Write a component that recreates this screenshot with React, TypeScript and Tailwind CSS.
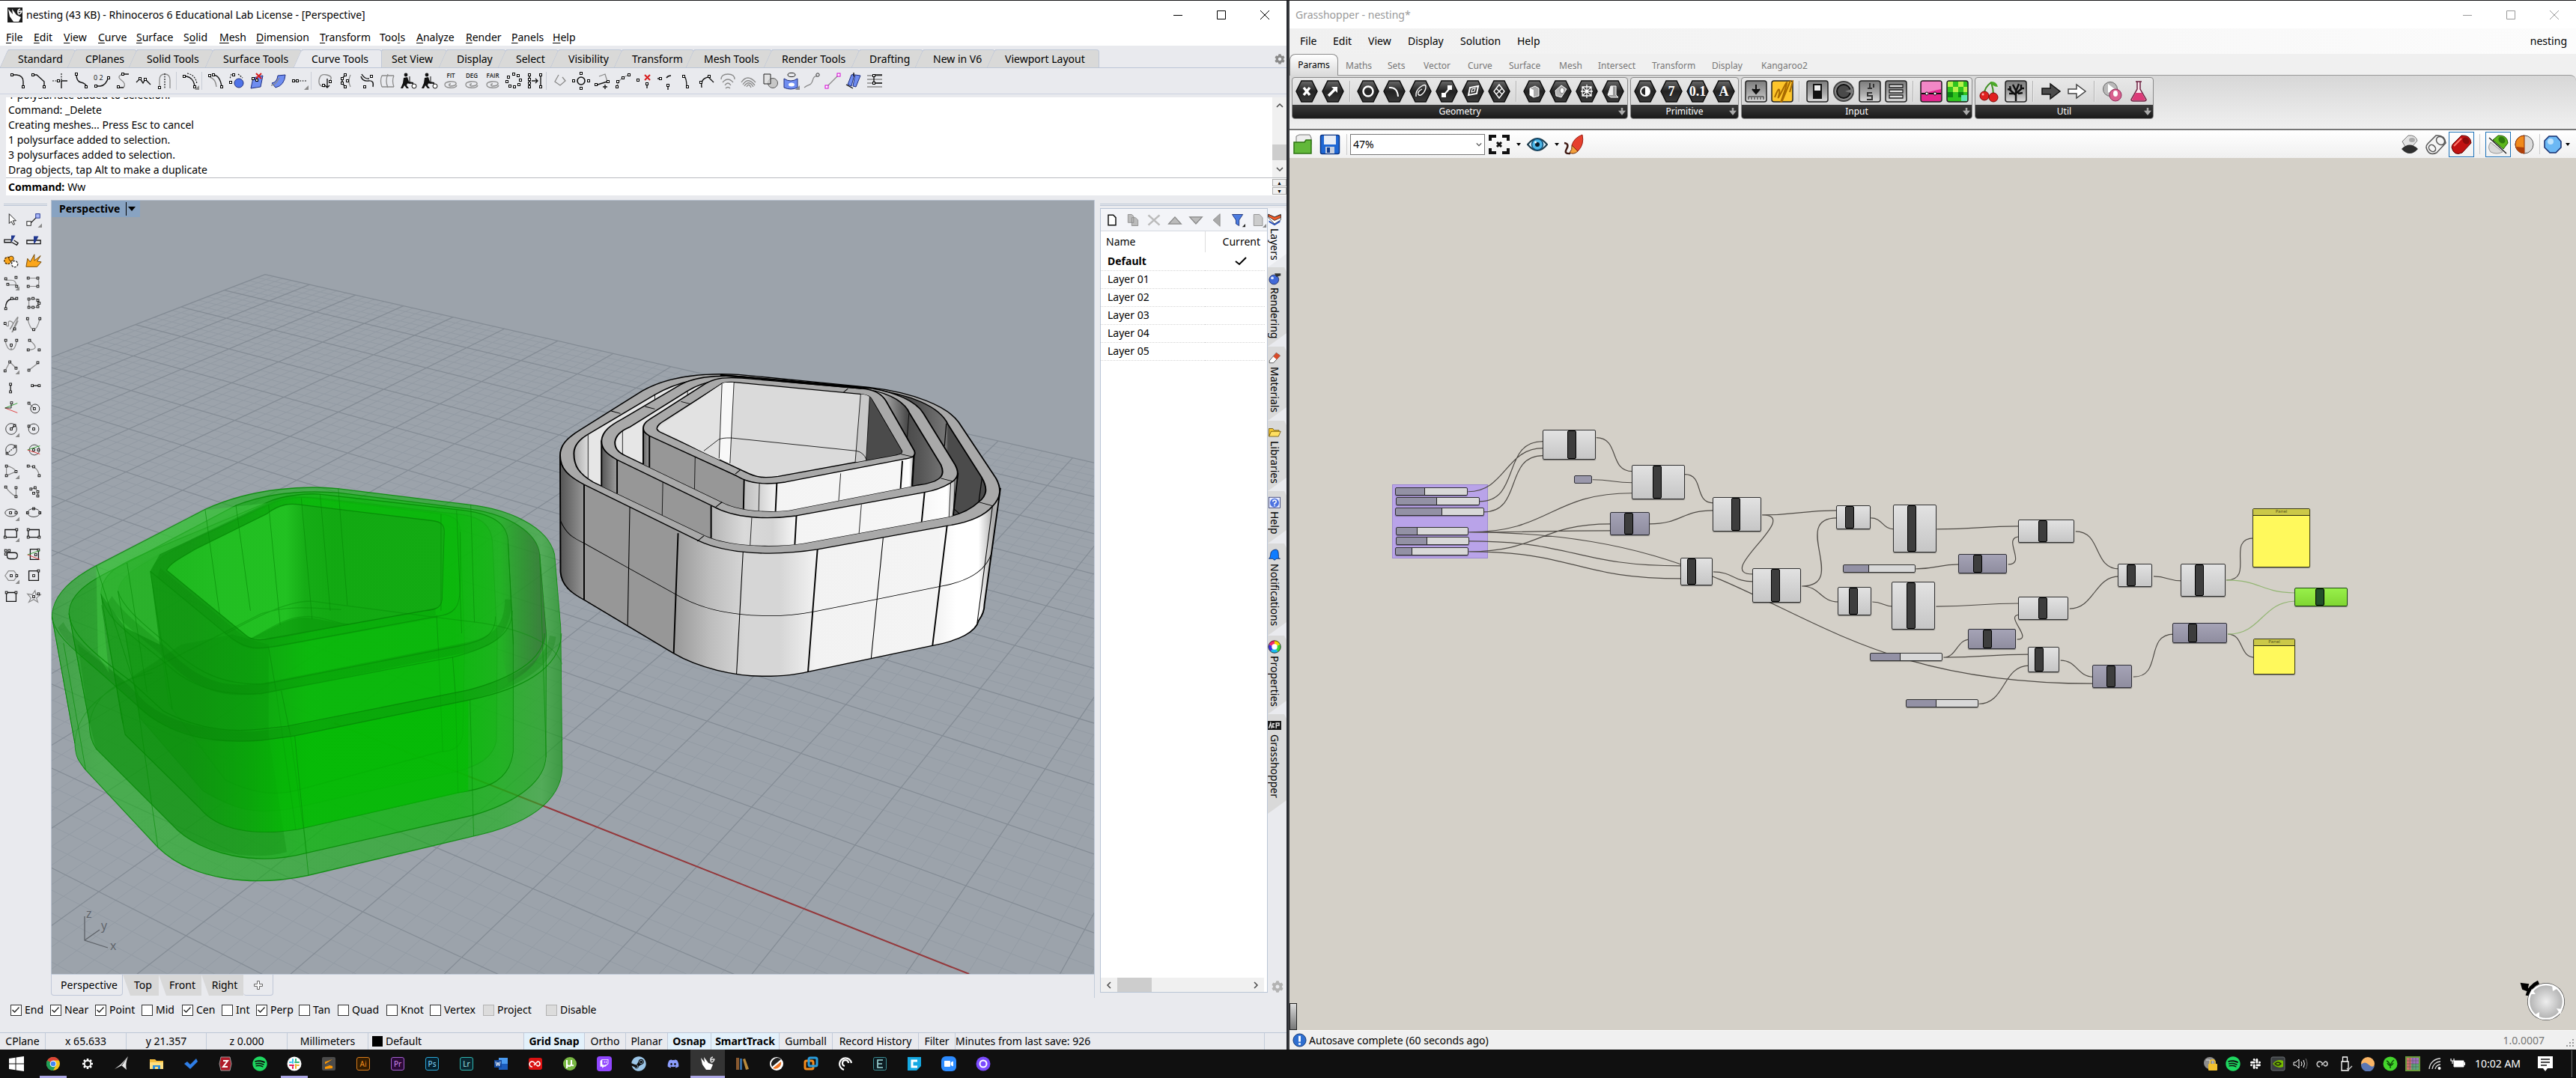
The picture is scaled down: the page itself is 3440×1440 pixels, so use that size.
import React from 'react';
import type { ReactNode } from 'react';
import { FaSpotify, FaSlack, FaTwitch, FaSteam, FaDiscord, FaCog, FaVideo } from 'react-icons/fa';

/* ---------- shared drawing helpers ---------- */

type GlyphProps = { d?: string; n?: string; g?: string; red?: string; b?: string; dash?: string; children?: ReactNode };

// Line-art glyph: d = dark stroke, g = grey stroke, n = control points, b = blue fill
function Glyph({ d, n, g, red, b, dash, children }: GlyphProps) {
  return (
    <svg viewBox="0 0 24 24" className="size-6 shrink-0" fill="none" aria-hidden="true">
      {b && <path d={b} fill="#6f8df0" stroke="#1f2f80" />}
      {g && <path d={g} stroke="#8b8b8b" strokeWidth="1.3" />}
      {d && <path d={d} stroke="#161616" strokeWidth="1.4" />}
      {dash && <path d={dash} stroke="#161616" strokeWidth="1.2" strokeDasharray="2 1.5" />}
      {red && <path d={red} stroke="#d81e1e" strokeWidth="2" />}
      {n &&
        n.split(' ').map((p) => {
          const [x, y] = p.split(',').map(Number);
          return <rect key={p} x={x - 1.5} y={y - 1.5} width="3" height="3" fill="#fff" stroke="#000" />;
        })}
      {children}
    </svg>
  );
}

const Corner = () => <path d="M24 18V24H18Z" fill="#8a8a8a" />;
const SwirlText = ({ t }: { t: string }) => (
  <Glyph g="M12 16c-3 0-3 3 0 3s8-1 7-4-15-3-15 2 14 6 16 1">
    <text x="12" y="8" fontSize="8" fontWeight="600" textAnchor="middle" fill="#222" fontFamily="Open Sans, sans-serif">
      {t}
    </text>
  </Glyph>
);
const Porter = () => (
  <Glyph>
    <circle cx="8" cy="4" r="2.4" fill="#111" />
    <path d="M5 8L10 7L12 13L18 14V16L10 15.500L9 18L12 22H9L6 18L4 22H1L4 15Z" fill="#111" />
    <circle cx="19" cy="19" r="3" fill="#fff" stroke="#111" />
    <path d="M13 6V16" stroke="#111" />
  </Glyph>
);

/* ---------- Rhino curve toolbar ---------- */

const curveTools: { name: string; icon: ReactNode }[][] = [
  [
    { name: 'Fillet curves', icon: <Glyph d="M4 4H10Q19 5 19 13V20" n="4,4 19,20" /> },
    { name: 'Chamfer curves', icon: <Glyph d="M4 4H9L19 13V20" n="4,4 19,20" /> },
    { name: 'Connect', icon: <Glyph d="M14 12H22M14 12V22" dash="M2 12H14M14 2V12" n="10,12" /> },
    { name: 'Blend curves', icon: <Glyph d="M6 3Q6 13 12 14T20 20" n="6,3 19,20" /> },
    {
      name: 'Arc blend',
      icon: (
        <Glyph d="M4 19H10Q18 18 21 6" n="4,19 21,8">
          <text x="1" y="11" fontSize="9" fill="#111" fontFamily="Open Sans, sans-serif">0 2</text>
        </Glyph>
      ),
    },
    { name: 'Match', icon: <Glyph d="M12 3H20M4 21H13" g="M12 3Q3 6 10 11T13 21" n="12,3 6,20" /> },
    { name: 'Symmetry', icon: <Glyph d="M2 14L7 9L11 15L14 10L21 17" n="7,9 14,10" /> },
    { name: 'Offset', icon: <Glyph g="M5 22V11Q5 3 12 3T19 11V22" dash="M12 2V22" n="5,21" /> },
  ],
  [{ name: 'Offset curve', icon: <Glyph d="M3 6H7Q17 8 18 20" dash="M8 2Q19 4 21 16" n="4,6 18,20"><Corner /></Glyph> }],
  [
    { name: 'Tween', icon: <Glyph d="M9 4Q18 5 20 20" g="M4 7Q12 9 13 20" n="4,5 9,4 20,20" /> },
    { name: 'Project', icon: <Glyph dash="M5 3L3 9M14 3L20 8" n="8,4 4,14"><circle cx="15" cy="15" r="6" fill="#4f73e8" stroke="#1c2c7c" /></Glyph> },
    { name: 'Extract isocurve', icon: <Glyph b="M6 8L19 5L16 20L3 22Z" red="M10 2L17 9M17 2L10 9" n="6,9 11,11" /> },
    { name: 'Pull curve', icon: <Glyph b="M3 15Q10 14 11 5L21 4Q20 18 8 21Z" g="M2 18Q8 18 13 8" /> },
    { name: 'Convert', icon: <Glyph dash="M5 12H22" n="4,12 9,12"><Corner /></Glyph> },
  ],
  [
    { name: 'Close curve', icon: <Glyph g="M12 20Q3 20 4 11T14 4T19 11" d="M15 9V20M12 18L15 21L18 18" n="10,18 19,13" /> },
    { name: 'Edit points', icon: <Glyph d="M11 4L7 9V15L11 20" g="M18 4Q14 12 18 20" n="11,4 7,9 7,15 11,20 14,12" /> },
    { name: 'Smooth', icon: <Glyph d="M4 6Q6 13 14 12T20 20M5 3Q9 10 15 9" n="9,20 18,6" /> },
    { name: 'Cross section', icon: <Glyph g="M4 5Q1 12 4 20M12 3Q8 12 12 21M20 5Q17 12 20 20M4 5H20M4 20H20" /> },
    { name: 'Cart', icon: <Porter /> },
    { name: 'Cart twice', icon: <Porter /> },
    { name: 'Fit', icon: <SwirlText t="FIT" /> },
    { name: 'Degree', icon: <SwirlText t="DEG" /> },
    { name: 'Fair', icon: <SwirlText t="FAIR" /> },
    { name: 'Rebuild', icon: <Glyph n="12,3 18,5 21,11 19,17 13,20 7,19 3,13 5,7" /> },
    { name: 'Rebuild master', icon: <Glyph d="M5 3V21M20 3V21M8 12H16M13 9L16 12L13 15" n="5,4 5,10 5,15 5,20 20,4 20,20" /> },
  ],
  [
    { name: 'Simplify', icon: <Glyph g="M10 4L5 13L12 18L19 12L15 7" /> },
    { name: 'Circle handle', icon: <Glyph n="12,2 2,12 22,12 12,22"><circle cx="12" cy="12" r="5" stroke="#111" strokeWidth="1.600" /></Glyph> },
    { name: 'Add kink', icon: <Glyph g="M8 6L16 3L19 13" d="M3 18L19 13M13 20H19M16 17V23" n="4,17 20,13" /> },
    { name: 'Add knot', icon: <Glyph g="M4 20Q5 9 20 4" n="4,20 5,13 12,8 20,4" /> },
    { name: 'Remove knot', icon: <Glyph red="M13 4L20 11M20 4L13 11" n="4,11 16,16" d="M16 18V22" /> },
    { name: 'Extend', icon: <Glyph d="M2 9H6M16 20V24M14 8Q16 5 20 5" n="6,9 16,18" /> },
    { name: 'Curve down', icon: <Glyph d="M9 5Q13 8 13 20" n="9,6 14,20" /> },
    { name: 'Handlebar', icon: <Glyph d="M5 21Q3 9 14 7L21 14" n="4,14 15,6" /> },
    { name: 'Catenary', icon: <Glyph g="M3 10Q3 3 12 3T21 10M5 14Q12 6 19 14M8 18Q12 12 16 18M9 22Q12 19 15 22" /> },
    { name: 'Contour', icon: <Glyph g="M2 14Q10 2 21 14M4 17Q11 6 20 18M6 19Q12 10 18 20M9 20Q12 14 15 21" /> },
    {
      name: 'Boolean',
      icon: (
        <Glyph>
          <circle cx="16" cy="15" r="6.500" fill="#c7c7c7" stroke="#555" />
          <path d="M4 3H13V16H4Z" fill="#ddd" fillOpacity=".7" stroke="#222" />
        </Glyph>
      ),
    },
    { name: 'Region', icon: <Glyph b="M3 9Q12 15 21 9V21Q12 25 3 21Z"><ellipse cx="13" cy="4" rx="5" ry="2.600" stroke="#222" /><ellipse cx="13" cy="17" rx="4" ry="2.500" fill="#fff" /><Corner /></Glyph> },
    { name: 'Freeform', icon: <Glyph g="M2 21C8 16 11 19 13 12S17 6 19 6"><circle cx="20" cy="4" r="2.200" stroke="#333" /></Glyph> },
    {
      name: 'Line between',
      icon: (
        <Glyph g="M4 20L20 4">
          <rect x="2" y="18" width="4" height="4" fill="#fff" stroke="#d400d4" />
          <rect x="18" y="2" width="4" height="4" fill="#fff" stroke="#d400d4" />
        </Glyph>
      ),
    },
    { name: 'Unroll', icon: <Glyph b="M9 4L13 3L9 19L4 17ZM14 4L21 5L15 20L11 19Z" d="M2 17L11 22M12 1V6" /> },
    { name: 'Duplicate', icon: <Glyph g="M2 5H22M2 10H22M2 15H22M2 20H22" d="M11 4V16M11 4H22M11 15H22" n="11,5 11,15" /> },
  ],
];

/* ---------- Rhino left tool palette ---------- */

const paletteTools: { name: string; icon: ReactNode }[] = [
  { name: 'Select', icon: <Glyph><path d="M9 4V18L12 15L15 20L17 19L14.500 14H19Z" fill="#fff" stroke="#111" /></Glyph> },
  { name: 'Point tools', icon: <Glyph d="M8 17L17 8"><rect x="2" y="15" width="6" height="6" fill="#fff" stroke="#111" /><rect x="15" y="4" width="6" height="6" fill="#a9b8f8" stroke="#1b2f90" /><Corner /></Glyph> },
  { name: 'Trim', icon: <Glyph d="M2 11H12V15H2ZM13 15L20 19L22 16L16 12"><path d="M12 5H18L13 14H12Z" fill="#20378f" /></Glyph> },
  { name: 'Split', icon: <Glyph d="M2 12H22V17H2Z"><path d="M12 6H19L14 16H12Z" fill="#20378f" /></Glyph> },
  { name: 'Join', icon: <Glyph><circle cx="7" cy="11" r="5" fill="#fba61b" stroke="#4a2c00" strokeDasharray="3 1.500" strokeWidth="1.500" /><circle cx="12" cy="8" r="3.500" fill="#fba61b" stroke="#4a2c00" /><circle cx="17" cy="16" r="4.500" fill="#fff" stroke="#333" strokeDasharray="3 1.500" strokeWidth="1.500" /></Glyph> },
  { name: 'Explode', icon: <Glyph><path d="M1 20L3 8L7 13L13 2L13 11L22 4L17 12L23 13L17 20Z" fill="#fba61b" stroke="#6a4100" /></Glyph> },
  { name: 'Curve', icon: <Glyph g="M4 9H12Q19 9 19 16H7" n="4,7 19,5 7,15 20,18"><Corner /></Glyph> },
  { name: 'Control curve', icon: <Glyph g="M4 6H18Q21 12 18 18H4" n="4,6 18,6 4,18 18,18" /> },
  { name: 'Arc by points', icon: <Glyph d="M4 20Q3 8 12 6H20" n="4,20 13,5 20,5" /> },
  { name: 'Closed curve', icon: <Glyph g="M5 6H18V18H5Z" n="5,6 11,5 18,8 20,12 18,17 11,18 5,18" /> },
  { name: 'Helix', icon: <Glyph g="M3 12Q9 18 8 12T12 8T12 17T17 8T16 17T22 7" n="3,11 17,19" /> },
  { name: 'Parabola', icon: <Glyph g="M3 4Q7 20 12 20T21 4" n="3,4 12,20 21,4" /> },
  { name: 'Conic', icon: <Glyph g="M3 5Q6 19 12 19T20 5M12 19V12" n="4,5 20,5 12,12" /> },
  { name: 'Hyperbola', icon: <Glyph g="M3 19Q24 19 6 5" n="6,5 4,19 20,19" /> },
  { name: 'Polyline', icon: <Glyph g="M3 19L10 6L20 16" n="3,19 10,6 19,15"><Corner /></Glyph> },
  { name: 'Line', icon: <Glyph g="M5 18L19 7" n="5,18 18,7" /> },
  { name: 'Vertical line', icon: <Glyph d="M11 8V19" n="11,8 11,19" /> },
  { name: 'Horizontal line', icon: <Glyph d="M10 10H21" n="10,10 20,10" /> },
  { name: 'Axis line', icon: <Glyph><path d="M3 12L21 19" stroke="#d33" /><path d="M3 12L21 5" stroke="#2a9a2a" /><path d="M3 12H12M12 5V12" stroke="#111" /><rect x="11" y="3" width="3" height="3" fill="#fff" stroke="#111" /></Glyph> },
  { name: 'Circle around curve', icon: <Glyph n="5,5 13,13" g="M5 5L13 13"><circle cx="14" cy="13" r="6.500" stroke="#222" /></Glyph> },
  { name: 'Circle', icon: <Glyph n="12,12 17,7" d="M12 12L17 7"><circle cx="12" cy="12" r="8" stroke="#333" /><Corner /></Glyph> },
  { name: 'Circle center', icon: <Glyph n="12,12 5,8"><circle cx="12" cy="12" r="7.500" stroke="#333" /></Glyph> },
  { name: 'Circle diameter', icon: <Glyph n="6,17 18,7" dash="M6 17L18 7"><circle cx="12" cy="12" r="8" stroke="#333" /></Glyph> },
  { name: 'Circle axis', icon: <Glyph n="12,12 19,12"><circle cx="13" cy="12" r="7.500" stroke="#333" /><path d="M3 12L21 6" stroke="#2a9a2a" /><path d="M3 12L21 18" stroke="#d33" /></Glyph> },
  { name: 'Arc', icon: <Glyph g="M5 19V5Q15 6 19 13Z" n="5,5 5,19 19,13"><Corner /></Glyph> },
  { name: 'Arc start', icon: <Glyph g="M4 5Q18 5 20 19" n="4,5 12,6 20,19" /> },
  { name: 'Arc end', icon: <Glyph g="M4 5Q10 14 19 19V5" n="4,5 19,19 19,6" /> },
  { name: 'Arc chain', icon: <Glyph n="8,8 14,6 18,12 18,18 12,14" g="M8 8L14 6L18 12V18" /> },
  { name: 'Ellipse', icon: <Glyph n="11,12 19,12"><ellipse cx="12" cy="12" rx="9" ry="5.500" stroke="#333" /><Corner /></Glyph> },
  { name: 'Ellipse diameter', icon: <Glyph n="3,12 21,12 12,6"><ellipse cx="12" cy="12" rx="9" ry="6" stroke="#333" /></Glyph> },
  { name: 'Rectangle', icon: <Glyph d="M3 6H20V17H3Z" n="3,17 20,6"><Corner /></Glyph> },
  { name: 'Rectangle corner', icon: <Glyph d="M4 6H20V17H4Z" n="4,6 4,17 20,17" /> },
  { name: 'Rounded rectangle', icon: <Glyph d="M6 9H17Q21 9 21 13T17 18H10Q6 18 6 14Z" n="4,6 9,6 4,11" /> },
  { name: 'Rectangle axis', icon: <Glyph d="M7 4H19V19H7Z" n="19,5 15,12"><path d="M3 12L21 6" stroke="#2a9a2a" /><path d="M3 12L21 19" stroke="#d33" /></Glyph> },
  { name: 'Polygon', icon: <Glyph g="M3 12L8 5H16L21 12L16 19H8Z" n="12,12 20,12"><Corner /></Glyph> },
  { name: 'Square center', icon: <Glyph d="M5 5H19V19H5Z" n="12,12 19,5" /> },
  { name: 'Square', icon: <Glyph d="M5 6H19V19H5Z" n="5,6 19,6" /> },
  { name: 'Star', icon: <Glyph g="M3 8L10 9L14 3L15 9L22 9L16 14L18 20L12 16L5 20L8 14Z" n="12,12 19,8" /> },
];

/* ---------- Rhino window ---------- */

const rhinoMenu = [
  ['', 'F', 'ile', 'w-[37px]'], ['', 'E', 'dit', 'w-10'], ['', 'V', 'iew', 'w-[46px]'], ['', 'C', 'urve', 'w-[51px]'],
  ['', 'S', 'urface', 'w-[63px]'], ['S', 'o', 'lid', 'w-12'], ['', 'M', 'esh', 'w-[49px]'], ['', 'D', 'imension', 'w-[85px]'],
  ['', 'T', 'ransform', 'w-20'], ['Too', 'l', 's', 'w-[49px]'], ['', 'A', 'nalyze', 'w-[66px]'], ['', 'R', 'ender', 'w-[61px]'],
  ['', 'P', 'anels', 'w-[55px]'], ['', 'H', 'elp', 'w-[50px]'],
];

const rhinoTabs: [string, string][] = [
  ['Standard', 'w-[90px]'], ['CPlanes', 'w-[82px]'], ['Solid Tools', 'w-[102px]'], ['Surface Tools', 'w-[118px]'],
  ['Curve Tools', 'w-[107px]'], ['Set View', 'w-[87px]'], ['Display', 'w-[79px]'], ['Select', 'w-[70px]'],
  ['Visibility', 'w-[85px]'], ['Transform', 'w-24'], ['Mesh Tools', 'w-[104px]'], ['Render Tools', 'w-[117px]'],
  ['Drafting', 'w-[85px]'], ['New in V6', 'w-24'], ['Viewport Layout', 'w-[139px]'],
];

function WindowButtons({ tone }: { tone: string }) {
  return (
    <div className={'ml-auto flex ' + tone}>
      <button aria-label="Minimize" className="grid h-9 w-[58px] place-items-center">
        <svg viewBox="0 0 12 12" className="size-3" stroke="currentColor"><path d="M0 6.500H12" /></svg>
      </button>
      <button aria-label="Maximize" className="grid h-9 w-[58px] place-items-center">
        <svg viewBox="0 0 12 12" className="size-3" fill="none" stroke="currentColor"><path d="M.5.5H11.500V11.500H.5Z" /></svg>
      </button>
      <button aria-label="Close" className="grid h-9 w-[58px] place-items-center">
        <svg viewBox="0 0 12 12" className="size-3" stroke="currentColor"><path d="M0 0L12 12M12 0L0 12" /></svg>
      </button>
    </div>
  );
}

function Tri({ dir, className }: { dir: 'up' | 'down' | 'left' | 'right'; className?: string }) {
  const d = { up: 'M1 7L5 3L9 7', down: 'M1 3L5 7L9 3', left: 'M7 1L3 5L7 9', right: 'M3 1L7 5L3 9' }[dir];
  return (
    <svg viewBox="0 0 10 10" className={className ?? 'size-2.5'} fill="none" stroke="#4a4a4a" strokeWidth="1.500" aria-hidden="true">
      <path d={d} />
    </svg>
  );
}

function RhinoHeader() {
  return (
    <header>
      <div className="flex h-[37px] items-center bg-white pl-2.5">
        <svg viewBox="0 0 20 20" className="size-5" aria-hidden="true">
          <rect width="20" height="20" fill="#1c1c1c" />
          <path d="M1 2L7 9L6 2L12 10L18 13L15 19H8L3 12Z" fill="#fff" />
          <path d="M17 2Q13 3 14 7T18 7T14 6" fill="none" stroke="#fff" strokeWidth="1.500" />
        </svg>
        <h1 className="ml-[5px]">nesting (43 KB) - Rhinoceros 6 Educational Lab License - [Perspective]</h1>
        <WindowButtons tone="text-black" />
      </div>
      <nav className="flex h-[23px] items-center bg-white pl-2">
        {rhinoMenu.map(([a, u, z, w]) => (
          <button key={a + u + z} className={'shrink-0 text-left whitespace-nowrap ' + w}>
            {a}<span className="underline underline-offset-2">{u}</span>{z}
          </button>
        ))}
      </nav>
      <div className="flex h-[30px] items-end border-b border-[#bcc6d6] pl-[11px]">
        <div role="tablist" className="flex">
          {rhinoTabs.map(([t, w]) => {
            const on = t === 'Curve Tools';
            return (
              <button
                key={t}
                role="tab"
                aria-selected={on}
                className={
                  'relative h-6 shrink-0 rounded-tr border-t border-r border-[#c0c8d8] pl-[13px] text-left whitespace-nowrap ' +
                  'before:absolute before:-left-1.5 before:top-[-1px] before:h-6 before:w-4 before:-skew-x-[24deg] before:rounded-tl before:border-t before:border-l before:border-[#c0c8d8] ' +
                  (on ? 'z-10 -mb-px bg-[#e9eaee] before:bg-[#e9eaee] ' : 'bg-[#d9d9d8] before:bg-[#d9d9d8] ') +
                  w
                }
              >
                <span className="relative">{t}</span>
              </button>
            );
          })}
        </div>
        <button aria-label="Toolbar options" className="mr-0.5 mb-1 ml-auto text-[#8a8a8a]"><FaCog className="size-3.5" /></button>
      </div>
      <div className="flex h-[35px] items-center border-b border-[#ccd2e0] pl-2.5">
        {curveTools.map((group, i) => (
          <div key={i} className="mr-1 flex gap-1 border-r border-[#c9cdd6] pr-[3px] pl-0.5 last:border-0">
            {group.map((t) => (
              <button key={t.name} aria-label={t.name}>{t.icon}</button>
            ))}
          </div>
        ))}
      </div>
    </header>
  );
}

function CommandArea() {
  return (
    <section aria-label="Command history" className="mt-1 ml-2 bg-white">
      <div className="flex h-[108px] border-b border-[#b9bcc0]">
        <div className="flex flex-1 flex-col justify-end overflow-hidden pl-[3px] leading-5">
          <p className="shrink-0">1 polysurface added to selection.</p>
          <p className="shrink-0">Command: _Delete</p>
          <p className="shrink-0">Creating meshes... Press Esc to cancel</p>
          <p className="shrink-0">1 polysurface added to selection.</p>
          <p className="shrink-0">3 polysurfaces added to selection.</p>
          <p className="shrink-0">Drag objects, tap Alt to make a duplicate</p>
        </div>
        <div className="flex w-[19px] flex-col items-center bg-[#f0f0f0] py-1.5">
          <Tri dir="up" />
          <div className="mt-auto h-[21px] w-full bg-[#cdcdcd]" />
          <Tri dir="down" className="mt-[7px] size-2.5" />
        </div>
      </div>
      <div className="flex h-[23px] items-center pl-[3px]">
        <label htmlFor="cmd" className="mr-1 font-bold">Command:</label>
        <input id="cmd" defaultValue="Ww" className="h-5 min-w-0 flex-1 outline-none" />
        <div className="flex w-[19px] flex-col gap-px">
          <button aria-label="Previous command" className="grid h-2.5 place-items-center border border-[#adadad] bg-[#f0f0f0] text-[7px] leading-none">▲</button>
          <button aria-label="Next command" className="grid h-2.5 place-items-center border border-[#adadad] bg-[#f0f0f0] text-[7px] leading-none">▼</button>
        </div>
      </div>
    </section>
  );
}

/* ---------- Viewport drawing ---------- */

// Perspective projection of the construction plane, in major grid units
function project(u: number, v: number): [number, number] {
  const w = 1 - 0.0173 * u - 0.0263 * v;
  return [(354 + 52.25 * u - 62.5 * v) / w, (367.6 + 6.9 * u + 10.9 * v) / w];
}

function gridPath(major: boolean) {
  let d = '';
  for (let i = 0; i <= 100; i++) {
    if ((i % 5 === 0) !== major) continue;
    const t = i / 5;
    const [a, b] = [project(0, t), project(20, t)];
    const [c, e] = [project(t, 0), project(t, 20)];
    d += `M${a[0].toFixed(1)} ${a[1].toFixed(1)}L${b[0].toFixed(1)} ${b[1].toFixed(1)}`;
    d += `M${c[0].toFixed(1)} ${c[1].toFixed(1)}L${e[0].toFixed(1)} ${e[1].toFixed(1)}`;
  }
  return d;
}

const outerRim = 'M99 508C99 470 115 440 155 405L325 250C390 195 480 176 590 184L950 235C1070 255 1165 310 1197 375L1300 600C1315 640 1315 675 1290 712C1265 755 1220 778 1165 790L808 885C690 912 560 905 480 850L165 625C120 590 99 560 99 508Z';
const outerHole = 'M137 500C137 465 155 440 180 420L360 265C430 205 500 195 560 192L960 245C1060 262 1145 310 1168 385L1260 595C1278 640 1275 670 1252 695C1230 725 1200 745 1165 755L770 860C680 880 560 870 500 830L190 615C150 580 137 550 137 500Z';
const midRim = 'M213 450C215 410 240 385 270 362L430 225C480 185 560 188 600 192L960 240C1020 255 1080 290 1100 340L1187 545C1200 580 1195 600 1175 618C1150 640 1120 652 1100 657L750 750C670 765 580 762 520 712L255 525C225 500 213 480 213 450Z';
const midHole = 'M250 455C252 430 265 410 290 395L450 250C490 212 540 200 600 203L950 245C1015 262 1050 300 1062 340L1148 545C1158 580 1152 598 1130 612C1115 620 1100 625 1085 627L730 728C670 738 590 730 545 695L280 510C258 495 250 480 250 455Z';
const innerRim = 'M328 400C328 375 345 365 360 350L500 220C530 195 560 195 600 198L940 242C970 250 985 262 997 290L1075 490C1080 510 1070 518 1050 522L720 615C660 628 620 620 585 590L345 430C333 420 328 412 328 400Z';
const innerHole = 'M366 400C366 385 380 375 390 365L540 225C548 215 560 213 580 215L925 262C945 265 955 272 960 290L1040 490C1042 500 1035 503 1020 507L700 592C660 600 640 597 610 575L375 415C368 410 366 405 366 400Z';

function Stops({ list }: { list: [number, string][] }) {
  return <>{list.map(([o, c], i) => <stop key={i} offset={o} stopColor={c} />)}</>;
}

function WhiteBoxes() {
  return (
    <g transform="translate(700 440) scale(.4847 .3333)" fill="none" stroke="#000" strokeLinejoin="round">
      <defs>
        <linearGradient id="wb-outer" gradientUnits="userSpaceOnUse" x1="99" x2="1312" y1="0" y2="0">
          <Stops list={[[0, '#555'], [0.055, '#979797'], [0.26, '#979797'], [0.27, '#9d9d9d'], [0.34, '#bdbdbd'], [0.42, '#d6d6d6'], [0.5, '#d6d6d6'], [0.58, '#f2f2f2'], [0.86, '#f4f4f4'], [0.9, '#fff'], [0.95, '#fff'], [0.985, '#aaa'], [1, '#ccc']]} />
        </linearGradient>
        <linearGradient id="wb-mid" gradientUnits="userSpaceOnUse" x1="213" x2="1195" y1="0" y2="0">
          <Stops list={[[0, '#555'], [0.04, '#979797'], [0.305, '#979797'], [0.31, '#b5b5b5'], [0.4, '#dadada'], [0.48, '#d4d4d4'], [0.54, '#f4f4f4'], [0.9, '#f6f6f6'], [0.97, '#fff'], [1, '#999']]} />
        </linearGradient>
        <linearGradient id="wb-inner" gradientUnits="userSpaceOnUse" x1="328" x2="1075" y1="0" y2="0">
          <Stops list={[[0, '#666'], [0.02, '#979797'], [0.37, '#979797'], [0.375, '#c0c0c0'], [0.43, '#d4d4d4'], [0.49, '#f4f4f4'], [0.95, '#f6f6f6'], [0.98, '#fff'], [1, '#aaa']]} />
        </linearGradient>
        <linearGradient id="wb-void" gradientUnits="userSpaceOnUse" x1="137" x2="1270" y1="0" y2="0">
          <Stops list={[[0, '#a8a8a8'], [0.04, '#e6e6e6'], [0.5, '#e6e6e6'], [0.73, '#d8d8d8'], [0.76, '#a0a0a0'], [0.81, '#4b4b4b'], [0.84, '#555'], [0.905, '#777'], [0.91, '#4b4b4b'], [1, '#4b4b4b']]} />
        </linearGradient>
        <clipPath id="wb-clip-outer"><path d={outerHole} /></clipPath>
        <clipPath id="wb-clip-mid"><path d={midHole} /></clipPath>
        <clipPath id="wb-clip-inner"><path d={innerHole} /></clipPath>
      </defs>
      <g strokeWidth="4">
        <path fill="url(#wb-outer)" d="M99 508L100 975C103 1030 130 1060 165 1087L410 1300C480 1360 580 1393 660 1393C720 1393 750 1385 782 1375L1125 1270C1200 1250 1245 1215 1252 1170C1265 1145 1268 1125 1268 1105L1312 640Z" />
        <path fill="#a9a9a9" d={outerRim} />
        <path fill="url(#wb-void)" d={outerHole} />
        <g clipPath="url(#wb-clip-outer)">
          <path d="M176 425V640M360 262V300" strokeWidth="2" />
          <path d="M1163 380L1158 470M1262 590L1252 700M1085 620Q1190 720 1210 760" strokeWidth="2.500" />
          <path fill="url(#wb-mid)" d="M213 450V700L500 900H1170L1195 580Z" />
          <path d="M256 525V700M515 710V860M750 750L745 880M1103 657L1094 790" />
          <path d="M382 615L380 760M627 758L622 880M929 705L922 830M1175 620L1170 770M1187 600L1182 770" strokeWidth="2" />
        </g>
        <path fill="#a9a9a9" d={midRim} />
        <path fill="url(#wb-void)" d={midHole} />
        <g clipPath="url(#wb-clip-mid)">
          <path d="M271 410V560M450 240V270M1060 340L1055 440" strokeWidth="2" />
          <path fill="url(#wb-inner)" d="M328 400V560L600 760L1068 660L1075 490Z" />
          <path d="M345 430V560M606 600L604 730M696 620L692 745M1042 530L1036 660" />
          <path d="M471 515L469 660M648 620L646 740M872 580L866 700M1072 510L1066 650" strokeWidth="2" />
        </g>
        <path fill="#a9a9a9" d={innerRim} />
        <path fill="#dadada" d={innerHole} />
        <g clipPath="url(#wb-clip-inner)">
          <path fill="#e2e2e2" stroke="none" d="M366 400L545 220L538 530Z" />
          <path fill="#f8f8f8" stroke="none" d="M545 215H578L567 540L537 520Z" />
          <path fill="#c9c9c9" stroke="none" d="M927 262H952L942 535H912Z" />
          <path fill="#4b4b4b" stroke="none" d="M952 265L1045 490L1040 510L942 535Z" />
          <path strokeWidth="2" d="M545 220L537 520M578 215L567 540M927 262L912 535M952 270L942 530M495 490L535 445Q545 437 570 438L915 490Q935 495 943 525" />
        </g>
        <path strokeWidth="7" d="M540 186L950 238" />
        <path strokeWidth="9" d="M700 208L930 238" />
      </g>
      <path strokeWidth="4" d="M165 625V1087M424 820L412 1300M808 885L782 1375M1165 790L1125 1270" />
      <path strokeWidth="2.200" d="M291 715L285 1190M603 895L585 1385M989 838L956 1320M1290 715L1248 1180" />
      <path strokeWidth="2.200" d="M100 770C115 820 130 835 165 860L288 960L415 1063C470 1110 530 1135 593 1144C660 1155 730 1153 795 1135L970 1085L1143 1034C1220 1015 1270 975 1288 900" />
      <path strokeWidth="2.500" d="M240 330L265 340M333 312L360 322M432 292L458 302M477 852L495 830M528 715L545 695M582 582L595 566M1038 503L1072 514M1148 600L1180 612M1252 695L1290 710M880 255L892 240" />
    </g>
  );
}

function GreenBoxes() {
  return (
    <g transform="translate(0 260) scale(.4847 .7525)" fill="none" stroke="#078a07" strokeOpacity=".85" strokeWidth="1.800">
      <defs>
        <linearGradient id="gb-core" gradientUnits="userSpaceOnUse" x1="245" x2="1505" y1="0" y2="0">
          <Stops list={[[0, '#0c960c'], [0.22, '#0b960b'], [0.36, '#08a508'], [0.48, '#04ba04'], [0.8, '#04ba04'], [0.9, '#14b514'], [1, '#1fa01f']]} />
        </linearGradient>
        <linearGradient id="gb-side" gradientUnits="userSpaceOnUse" x1="143" x2="1549" y1="0" y2="0">
          <Stops list={[[0, '#0ba00b'], [0.1, '#14b214'], [0.8, '#0aac0a'], [0.88, '#0cb00c'], [0.96, '#22b022'], [1, '#009200']]} />
        </linearGradient>
        <linearGradient id="gb-cup" gradientUnits="userSpaceOnUse" x1="459" x2="1224" y1="0" y2="0">
          <Stops list={[[0, '#20bd20'], [0.2, '#25c425'], [0.43, '#25c425'], [0.5, '#17aa17'], [0.6, '#13a613'], [1, '#14a914']]} />
        </linearGradient>
        <linearGradient id="gb-shade" gradientUnits="userSpaceOnUse" x1="1380" x2="1505" y1="0" y2="0">
          <stop offset="0" stopColor="#205a20" stopOpacity="0" />
          <stop offset="1" stopColor="#3f5a40" stopOpacity=".55" />
        </linearGradient>
        <linearGradient id="gb-front" gradientUnits="userSpaceOnUse" x1="500" x2="1300" y1="0" y2="0">
          <stop offset="0" stopColor="#0a9a0a" stopOpacity="0" />
          <stop offset=".35" stopColor="#04bb04" stopOpacity=".7" />
          <stop offset="1" stopColor="#04bb04" stopOpacity=".7" />
        </linearGradient>
      </defs>
      <path fill="url(#gb-side)" fillOpacity=".6" d="M143 750C145 715 190 685 265 660L565 560C700 520 850 518 930 523L1297 552C1400 560 1510 590 1528 640L1545 770L1549 1020C1545 1080 1450 1120 1305 1140L848 1210C700 1230 530 1220 435 1160L235 1022C215 1005 208 1000 206 975Z" />
      <path fill="url(#gb-core)" fillOpacity=".45" d="M190 745C190 705 265 680 350 655L650 553C750 528 850 526 940 531L1300 560C1400 570 1480 600 1487 640L1505 780L1504 1000C1500 1050 1400 1085 1303 1103L845 1170C700 1195 560 1170 490 1130L265 985C250 970 247 960 245 935Z" />
      <path fill="url(#gb-core)" fillOpacity=".45" d="M278 710C280 670 340 655 410 635L735 548C780 533 860 532 880 533L1280 562C1370 570 1400 590 1400 620L1414 790V990C1405 1040 1350 1055 1260 1063L820 1128C700 1140 600 1130 550 1090L345 960L335 930Z" />
      <path fill="url(#gb-core)" fillOpacity=".4" strokeOpacity=".25" d="M325 705C330 675 400 655 440 640L740 552C780 538 840 537 880 540L1255 568C1330 572 1355 590 1357 620L1370 790L1368 970C1360 1000 1320 1015 1260 1025L810 1090C700 1105 640 1090 560 1060L385 930L378 900Z" />
      <path fill="#007c00" fillOpacity=".22" stroke="none" d="M215 800L345 865L500 800L640 782L740 800L740 960L790 1168C700 1185 560 1170 490 1130L265 985L245 935Z" />
      <path fill="url(#gb-front)" stroke="none" d="M500 970C640 975 740 972 812 962L1290 898V1060L820 1128C700 1140 600 1130 550 1090Z" />
      <path fill="url(#gb-core)" fillOpacity=".3" strokeOpacity=".15" d="M414 670C420 655 450 640 500 625L740 550C770 538 800 537 830 538L1215 568C1260 572 1268 585 1268 600L1280 800L1275 960C1270 985 1240 990 1215 990L810 1060C750 1070 680 1060 620 1040L475 915L465 905Z" />
      <path fill="#4ad44a" fillOpacity=".4" stroke="none" d="M265 662L565 561L735 549L440 640L414 670L440 800L345 770L278 710L300 850L270 820Z" />
      <path fill="url(#gb-shade)" stroke="none" d="M1300 565C1400 570 1480 600 1487 640L1505 780C1500 820 1460 850 1400 868Z" />
      <path fill="url(#gb-cup)" fillOpacity=".85" d="M459 668C470 655 500 645 540 630L735 568C770 550 800 549 830 552L1190 580C1220 582 1224 590 1224 600L1218 720C1215 735 1200 738 1170 740L780 785C720 792 700 795 680 785Z" />
      <path fill="#0b9a0b" fillOpacity=".7" stroke="none" d="M690 790C740 775 780 755 830 752C880 752 900 760 960 764L780 787Z" />
      <path strokeOpacity=".4" d="M690 790C740 775 780 750 850 750C900 752 920 762 960 764M620 782C720 745 800 722 860 723L1180 750L1330 762C1450 775 1530 800 1549 835M206 975C215 900 330 870 430 840L720 745C800 730 850 735 940 738M247 940C260 880 350 860 420 850" />
      <g stroke="#067a06" strokeOpacity=".24" strokeWidth="18">
        <path d="M167 765C190 800 300 845 380 900C450 950 600 965 700 963C760 960 800 954 840 949L1290 889C1420 870 1515 835 1523 785" />
        <path d="M302 720C340 760 430 795 480 830C560 880 640 885 720 878L1280 806C1350 797 1400 780 1400 720" />
        <path strokeOpacity=".16" d="M437 672L650 785C690 805 720 799 770 794L1200 744" />
      </g>
      <path d="M143 750C150 790 230 820 320 875L385 912C480 970 620 975 720 970L812 962L1295 898C1430 880 1545 845 1547 780M190 745C195 790 300 835 360 865L450 918C560 955 650 955 720 950L790 945L1290 881C1400 862 1500 830 1500 780" />
      <path strokeOpacity=".6" d="M278 710C290 760 380 790 460 835C540 885 640 890 720 887L1250 822C1350 805 1410 785 1412 740M325 705C340 740 420 775 470 805C560 860 640 872 730 870L1245 805C1330 795 1365 785 1365 750" />
      <path strokeOpacity=".6" d="M414 670L640 790C690 812 720 806 760 803L1220 748C1262 742 1268 725 1268 690V600" />
      <path strokeOpacity=".7" d="M265 660L380 890M350 655L405 885M565 560L605 745M650 553L690 740M740 552L772 765M830 540L860 755M882 533L910 740M932 523L957 730M1297 552L1307 760M812 962L850 1210M775 882L800 960M740 805L760 880M1295 898L1305 1140M1247 822L1255 890M1203 748L1208 810M175 797L236 1022M380 910L435 1160M1258 562L1272 780M1215 568V740M1487 640L1505 1000M143 750L206 975M1400 620L1414 800M325 705L385 930M414 670L475 915M280 730L340 940M190 745L247 940" />
      <path strokeOpacity=".3" d="M800 960L845 1170M760 880L815 1128M1255 890L1262 1063M1208 810L1220 990" />
    </g>
  );
}

function Viewport() {
  return (
    <div className="relative min-h-0 flex-1 overflow-hidden border-t border-l border-[#b9c2cf] bg-[#9ca3ab]">
      <svg viewBox="69 269 1392 1033" preserveAspectRatio="xMinYMin slice" className="absolute inset-0 size-full" role="img" aria-label="Perspective view of nested boxes">
        <path d={gridPath(false)} stroke="#939ba4" strokeWidth="1" fill="none" />
        <path d={gridPath(true)} stroke="#838b94" strokeWidth="1.200" fill="none" />
        <path d="M446 967L1294 1302" stroke="#95383b" strokeWidth="2" />
        <GreenBoxes />
        <WhiteBoxes />
        <g stroke="#5e6268" strokeWidth="1.300" fill="none"><path d="M113 1225V1257L144 1267M113 1257L133 1243" /></g>
        <g fill="#5e6268" fontSize="16" fontFamily="Open Sans, sans-serif">
          <text x="115" y="1227">z</text><text x="135" y="1243">y</text><text x="147" y="1270">x</text>
        </g>
      </svg>
      <button className="absolute top-0 left-0 flex h-[22px] items-center bg-[#88a3c2] pr-1.5 pl-2.5 font-bold">
        Perspective
        <span className="ml-2 h-[18px] w-px bg-black" />
        <svg viewBox="0 0 10 6" className="ml-0.5 h-1.5 w-2.5" aria-hidden="true"><path d="M0 0H10L5 6Z" /></svg>
      </button>
    </div>
  );
}

const viewTabs: [string, string][] = [['Top', 'w-12'], ['Front', 'w-[57px]'], ['Right', 'w-[56px]']];

/* ---------- Layers panel ---------- */

const layerButtons: { name: string; icon: ReactNode }[] = [
  { name: 'New layer', icon: <Glyph><path d="M6 4H14L18 8V20H6Z" fill="#fff" stroke="#111" strokeWidth="1.800" /></Glyph> },
  { name: 'New sublayer', icon: <Glyph><path d="M4 3H10L13 6V16H4ZM10 8H16L20 12V21H10Z" fill="#bbb" stroke="#888" /></Glyph> },
  { name: 'Delete', icon: <Glyph><path d="M3 4L21 20M21 4L3 20" stroke="#bbb" strokeWidth="3" /></Glyph> },
  { name: 'Move up', icon: <Glyph><path d="M2 18L12 7L22 18Z" fill="#bbb" stroke="#888" strokeWidth="1.500" /></Glyph> },
  { name: 'Move down', icon: <Glyph><path d="M2 7L12 18L22 7Z" fill="#bbb" stroke="#888" strokeWidth="1.500" /></Glyph> },
  { name: 'Move left', icon: <Glyph><path d="M17 2V22L6 12Z" fill="#aaa" stroke="#888" /></Glyph> },
  { name: 'Filter', icon: <Glyph><path d="M3 3H20L14 12V21L9 18V12Z" fill="#4b7be0" stroke="#12266e" /><path d="M24 18V23H19Z" fill="#222" /></Glyph> },
  { name: 'Tools', icon: <Glyph><path d="M4 3H13L18 8V21H4Z" fill="#ccc" stroke="#888" /><Corner /></Glyph> },
];

const sideTabs: { name: string; h: string; icon: ReactNode }[] = [
  { name: 'Layers', h: 'h-[79px]', icon: <><path d="M1 3L12 8L23 3V13L12 20L1 9Z" fill="#fff" stroke="#222" /><path d="M1 3L12 8L23 4V9L12 14L1 7Z" fill="#f05a28" stroke="#222" /><path d="M2 14L12 20L22 14V17L12 23L2 17Z" fill="#284fb8" /></> },
  { name: 'Rendering', h: 'h-[106px]', icon: <><circle cx="11" cy="14" r="8.500" fill="#4169d8" stroke="#0d1b52" /><circle cx="8" cy="11" r="2.500" fill="#dfe8ff" /><path d="M12 3H23V7L15 9Z" fill="#333" /></> },
  { name: 'Materials', h: 'h-[99px]', icon: <><path d="M3 17L15 3L22 8L10 21L3 21Z" fill="#fff" stroke="#333" /><path d="M10 10L15 3L22 8L16 15Z" fill="#d84a28" /></> },
  { name: 'Libraries', h: 'h-[94px]', icon: <><path d="M2 20V6H9L11 9H20V12" fill="#f4c52c" stroke="#5e4600" /><path d="M2 20L6 11H23L19 20Z" fill="#ffdf60" stroke="#5e4600" /></> },
  { name: 'Help', h: 'h-[70px]', icon: <><rect x="2" y="3" width="20" height="19" fill="#e6ebff" stroke="#222a66" /><circle cx="12" cy="13" r="8" fill="#4d72e0" /><path d="M9 11Q9 8 12 8T15 11Q15 13 12 14V16M12 17V19" fill="none" stroke="#fff" strokeWidth="2" /></> },
  { name: 'Notifications', h: 'h-[123px]', icon: <path d="M2 19Q5 17 5 11T12 3T19 11T22 19H15Q12 24 9 19Z" fill="#0f7cff" stroke="#001a55" /> },
  { name: 'Properties', h: 'h-[105px]', icon: <><path d="M12 12L12 1A11 11 0 0 1 22 8Z" fill="#f7d300" /><path d="M12 12L22 8A11 11 0 0 1 18 21Z" fill="#37d637" /><path d="M12 12L18 21A11 11 0 0 1 5 20Z" fill="#17b9ee" /><path d="M12 12L5 20A11 11 0 0 1 2 8Z" fill="#3b30e0" /><path d="M12 12L2 8A11 11 0 0 1 12 1Z" fill="#f32a6a" /><circle cx="12" cy="12" r="5" fill="#fff" /><circle cx="12" cy="12" r="11" fill="none" stroke="#111" /></> },
  { name: 'Grasshopper', h: 'h-[133px]', icon: <><rect y="4" width="24" height="16" fill="#1a1a1a" /><path d="M2 17L5 8L7 17M12 9H9V15H12M15 17V8H20V12H15" fill="none" stroke="#ddd" strokeWidth="2" /></> },
];

function LayersPanel() {
  return (
    <aside aria-label="Panels" className="flex w-[249px] shrink-0 pt-[5px]">
      <div className="flex flex-1 flex-col border-t-[3px] border-double border-[#bcc6d6]">
        <div className="flex min-h-0 flex-1 pt-[3px] pb-[7px]">
          <div className="flex w-[224px] shrink-0 flex-col overflow-hidden border border-[#b9c5d6] bg-white">
            <div className="flex h-[30px] shrink-0 items-center gap-1 border-b border-[#d6dae2] bg-[#f3f4f8] pl-[3px]">
              {layerButtons.map((b) => (
                <button key={b.name} aria-label={b.name} className="grid w-6 shrink-0 place-items-center [&>svg]:size-5">{b.icon}</button>
              ))}
            </div>
            <table className="w-[219px] table-fixed border-collapse text-left">
              <thead>
                <tr className="h-7">
                  <th className="w-[139px] border-r border-[#ddd] pl-[7px] font-normal">Name</th>
                  <th className="pr-1.5 text-right font-normal">Current</th>
                </tr>
              </thead>
              <tbody>
                {['Default', 'Layer 01', 'Layer 02', 'Layer 03', 'Layer 04', 'Layer 05'].map((l, i) => (
                  <tr key={l} className="h-6 border-b border-dotted border-[#d4d4d4]">
                    <td className={i === 0 ? 'pl-[9px] font-bold' : 'pl-[9px]'}>{l}</td>
                    <td>
                      {i === 0 && (
                        <svg viewBox="0 0 16 12" className="ml-10 h-3 w-4" fill="none" stroke="#000" strokeWidth="2" aria-label="Current layer">
                          <path d="M1 6L6 10L15 1" />
                        </svg>
                      )}
                    </td>
                  </tr>
                ))}
              </tbody>
            </table>
            <div className="mt-auto mr-1 flex h-[19px] items-center bg-[#f0f0f0] pr-1.5 pl-1.5">
              <Tri dir="left" />
              <div className="ml-1.5 h-full w-[46px] bg-[#cdcdcd]" />
              <Tri dir="right" className="ml-auto size-2.5" />
            </div>
          </div>
          <div className="flex flex-1 flex-col">
            {sideTabs.map((t, i) => (
              <button
                key={t.name}
                className={
                  'flex shrink-0 flex-col items-start pt-1.5 [clip-path:polygon(0_0,88%_0,100%_6px,100%_calc(100%-18px),0_100%)] ' +
                  (i === 0 ? 'bg-[#f3f4f8] ' : 'bg-[#d9d9d9] ') + t.h
                }
              >
                <svg viewBox="0 0 24 24" className="size-[18px] shrink-0" aria-hidden="true">{t.icon}</svg>
                <span className="mt-[3px] text-[14px] leading-[18px] [writing-mode:vertical-rl]">{t.name}</span>
              </button>
            ))}
            <button aria-label="Panel options" className="mt-auto mr-1 self-end text-[#b3b3b3]"><FaCog className="size-4" /></button>
          </div>
        </div>
      </div>
    </aside>
  );
}

/* ---------- Osnap and status ---------- */

const snaps: [string, boolean, string][] = [
  ['End', true, 'w-[53px]'], ['Near', true, 'w-[60px]'], ['Point', true, 'w-[62px]'], ['Mid', false, 'w-[54px]'],
  ['Cen', true, 'w-[53px]'], ['Int', false, 'w-[46px]'], ['Perp', true, 'w-[57px]'], ['Tan', false, 'w-[52px]'],
  ['Quad', false, 'w-[65px]'], ['Knot', false, 'w-[58px]'], ['Vertex', false, 'w-[71px]'], ['Project', false, 'w-[84px]'], ['Disable', false, 'w-20'],
];

function OsnapBar() {
  return (
    <div className="flex h-[46px] shrink-0 items-start pt-[6px] pl-[13px]">
      {snaps.map(([t, on, w]) => {
        const off = t === 'Project' || t === 'Disable';
        return (
          <label key={t} className={'flex shrink-0 items-center gap-1 ' + w}>
            <span className="grid size-4 place-items-center">
              <input
                type="checkbox"
                defaultChecked={on}
                className={'peer col-start-1 row-start-1 size-[15px] appearance-none border ' + (off ? 'border-[#b3b3b3] bg-[#dcdcdc]' : 'border-[#333] bg-white')}
              />
              <svg viewBox="0 0 12 12" className="pointer-events-none invisible col-start-1 row-start-1 size-3 peer-checked:visible" fill="none" stroke="#222" strokeWidth="1.300" aria-hidden="true">
                <path d="M1.500 6L4.500 9L10.500 2.500" />
              </svg>
            </span>
            {t}
          </label>
        );
      })}
    </div>
  );
}

const cells: [string, string][] = [
  ['CPlane', 'w-[61px]'], ['x 65.633', 'w-[108px]'], ['y 21.357', 'w-[107px]'], ['z 0.000', 'w-[108px]'], ['Millimeters', 'w-[108px]'],
];
const toggles: [string, boolean, string][] = [
  ['Grid Snap', true, 'w-[81px]'], ['Ortho', false, 'w-[55px]'], ['Planar', false, 'w-14'], ['Osnap', true, 'w-[58px]'],
  ['SmartTrack', true, 'w-[91px]'], ['Gumball', false, 'w-[71px]'], ['Record History', false, 'w-[115px]'], ['Filter', false, 'w-[49px]'],
];

function RhinoStatus() {
  return (
    <footer className="flex h-[23px] shrink-0 items-stretch border-t border-[#bcc6d6] text-[14px]">
      {cells.map(([t, w]) => (
        <span key={t} className={'grid shrink-0 place-items-center border-r border-[#c3ccda] ' + w}>{t}</span>
      ))}
      <button className="flex w-[208px] shrink-0 items-center border-r border-[#c3ccda] pl-[5px]">
        <span className="mr-1 size-3.5 bg-black" />Default
      </button>
      {toggles.map(([t, on, w]) => (
        <button
          key={t}
          aria-pressed={on}
          className={'grid shrink-0 place-items-center border-r border-[#c3ccda] whitespace-nowrap ' + (on ? 'bg-[#e3f1fb] font-bold ' : '') + w}
        >
          {t}
        </button>
      ))}
      <span className="flex items-center">Minutes from last save: 926</span>
      <span className="mr-[29px] ml-auto border-r border-[#c3ccda]" />
    </footer>
  );
}

function RhinoWindow() {
  return (
    <section aria-label="Rhinoceros" className="flex min-w-0 flex-1 basis-0 flex-col overflow-hidden border-r-2 border-[#26282e] bg-[#e9eaee]">
      <RhinoHeader />
      <CommandArea />
      <div className="mt-[6px] flex min-h-0 flex-1">
        <div className="w-[68px] shrink-0 pt-[5px]">
          <div className="mx-[5px] mb-1 h-[3px] border-t-[3px] border-double border-[#bcc6d6]" />
          <div className="grid w-[60px] grid-cols-2">
            {paletteTools.map((t) => (
              <button key={t.name} aria-label={t.name} className="grid h-7 place-items-center [&>svg]:size-[22px]">{t.icon}</button>
            ))}
          </div>
        </div>
        <div className="mr-[7px] flex min-w-0 flex-1 flex-col border-r border-[#c3ccda]">
          <Viewport />
          <div className="flex h-8 shrink-0 items-start border-t border-[#c3ccda] bg-[#e9eaee]">
            <button className="h-7 w-[96px] rounded-b border-r border-b border-l border-[#c0c8d8] pl-1.5">Perspective</button>
            {viewTabs.map(([t, w]) => (
              <button key={t} className={'h-7 bg-[#d8d8d8] pl-1.5 [clip-path:polygon(0_0,100%_0,100%_100%,10px_100%)] ' + w}>{t}</button>
            ))}
            <button aria-label="New view" className="grid h-7 w-10 place-items-center rounded-b border-r border-b border-[#c0c8d8]">
              <svg viewBox="0 0 12 12" className="size-3" fill="#fff" stroke="#666" aria-hidden="true"><path d="M4.500.5H7.500V4.500H11.500V7.500H7.500V11.500H4.500V7.500H.5V4.500H4.500Z" /></svg>
            </button>
          </div>
        </div>
        <LayersPanel />
      </div>
      <OsnapBar />
      <RhinoStatus />
    </section>
  );
}

/* ---------- Grasshopper ribbon ---------- */

function Hex({ children }: { children: ReactNode }) {
  return (
    <svg viewBox="0 0 30 30" className="size-[30px]" aria-hidden="true">
      <path d="M8 1H22L29 15L22 29H8L1 15Z" fill="url(#gh-hex)" stroke="#0d0d0d" strokeWidth="1.500" />
      <g fill="none" stroke="#fff" strokeWidth="2">{children}</g>
    </svg>
  );
}
function HexText({ t }: { t: string }) {
  return (
    <Hex>
      <text x="15" y="21" fontSize="18" fontWeight="700" textAnchor="middle" fill="#fff" stroke="none" fontFamily="Liberation Serif, serif">{t}</text>
    </Hex>
  );
}
function Tile({ fill, children }: { fill: string; children: ReactNode }) {
  return (
    <svg viewBox="0 0 30 30" className="size-[30px]" aria-hidden="true">
      <rect x="1" y="1" width="28" height="28" rx="3" fill={fill} stroke="#222" strokeWidth="1.500" />
      {children}
    </svg>
  );
}
const Plain = ({ children }: { children: ReactNode }) => <svg viewBox="0 0 30 30" className="size-[30px]" aria-hidden="true">{children}</svg>;

const ribbon: { name: string; groups: ReactNode[][] }[] = [
  {
    name: 'Geometry',
    groups: [
      [<Hex><path d="M11 10L19 20M19 10L11 20" strokeWidth="3.500" /></Hex>, <Hex><path d="M9 21L18 12" strokeWidth="3.500" /><path d="M13 9H21V17Z" fill="#fff" stroke="none" /></Hex>],
      [
        <Hex><circle cx="15" cy="15" r="6.500" strokeWidth="2.500" /></Hex>,
        <Hex><path d="M8 10Q19 9 20 22" /></Hex>,
        <Hex><path d="M9 22Q8 14 15 9T22 9T18 18T12 19T17 12" strokeWidth="1.400" /></Hex>,
        <Hex><path d="M11 20L19 11" /><rect x="9" y="18" width="4" height="4" fill="#fff" /><rect x="17" y="8" width="4" height="4" fill="#fff" /></Hex>,
        <Hex><path d="M9 20L11 10L22 8L20 18Z" /><path d="M13 16L14 12L18 11L17 15Z" strokeWidth="1.200" /></Hex>,
        <Hex><path d="M15 6L22 15L15 24L8 15ZM11 11L19 19M19 11L11 19" strokeWidth="1.400" /></Hex>,
      ],
      [
        <Hex><path d="M9 11L16 8L21 11V21L14 23L9 20Z" fill="#aaa" strokeWidth="1" /><path d="M9 11L14 13V23L9 20Z" fill="#fff" stroke="none" /></Hex>,
        <Hex><path d="M8 14L16 7L23 12L16 23L9 21Z" fill="#b5b5b5" strokeWidth="1" /><ellipse cx="17" cy="14" rx="3" ry="4" fill="#fff" stroke="#777" strokeWidth="1" /></Hex>,
        <Hex><path d="M15 6V24M7 15H23M9 9L21 21M21 9L9 21M9 9H21V21H9Z" strokeWidth="1.300" /></Hex>,
        <Hex><path d="M12 8H19V20L22 23H12L8 20Z" fill="#999" strokeWidth="1" /><path d="M12 8H15V20L8 20Z" fill="#eee" stroke="none" /></Hex>,
      ],
    ],
  },
  {
    name: 'Primitive',
    groups: [[<Hex><circle cx="15" cy="15" r="6" /><path d="M15 9A6 6 0 0 1 15 21Z" fill="#fff" stroke="none" /></Hex>, <HexText t="7" />, <HexText t="0.1" />, <HexText t="A" />]],
  },
  {
    name: 'Input',
    groups: [
      [
        <Tile fill="url(#gh-tile)"><path d="M15 6V16M10 12L15 18L20 12" fill="#111" stroke="#111" strokeWidth="2" /><path d="M5 26V22H25V26M9 26V23M13 26V23M17 26V23M21 26V23" stroke="#222" fill="none" /></Tile>,
        <Tile fill="#fdc52b"><path d="M5 23Q10 10 11 13T10 22T17 10T16 21T23 8T25 16" fill="none" stroke="#a86a00" strokeWidth="2" /></Tile>,
      ],
      [
        <Tile fill="url(#gh-tile)"><rect x="10" y="6" width="10" height="18" fill="#eee" stroke="#111" strokeWidth="2" /><rect x="11" y="14" width="8" height="9" fill="#111" /></Tile>,
        <Plain><circle cx="15" cy="15" r="13" fill="#8a8a8a" stroke="#444" strokeWidth="2" /><circle cx="15" cy="15" r="9" fill="#4a4a4a" stroke="#111" strokeWidth="2" /><path d="M17 15L28 11V18Z" fill="#777" /></Plain>,
        <Tile fill="url(#gh-tile)"><path d="M12 11H18M15 4V12M20 5V10M18 17H12V21H18V26H11" fill="none" stroke="#333" strokeWidth="2" /></Tile>,
        <Tile fill="url(#gh-tile)"><path d="M6 6H24V10H6ZM6 13H24V17H6ZM6 20H24V24H6Z" fill="#dedede" stroke="#222" strokeWidth="1.300" /></Tile>,
      ],
      [
        <Tile fill="#e4288f"><path d="M2 2H28V12L2 18Z" fill="#f287c6" /><path d="M2 18H8M12 18H18M22 18H28" stroke="#111" strokeWidth="2" /><circle cx="9" cy="18" r="2" fill="#fff" stroke="#111" /><circle cx="20" cy="18" r="2" fill="#fff" stroke="#111" /></Tile>,
        <Tile fill="#2fc41e"><path d="M2 2H9V9H2ZM16 2H23V9H16ZM9 9H16V16H9ZM23 9H28V16H23Z" fill="#b6f24a" /><path d="M2 16H9V23H2ZM16 16H23V23H16Z" fill="#0b8312" /><path d="M20 20H28V28H20Z" fill="#5fe6b0" /></Tile>,
      ],
    ],
  },
  {
    name: 'Util',
    groups: [
      [
        <Plain><path d="M17 3Q8 10 8 18M17 3Q20 12 20 20" fill="none" stroke="#3f8f22" strokeWidth="2" /><path d="M16 2Q24 1 26 9Q18 9 16 2Z" fill="#4caa28" /><circle cx="8" cy="21" r="6" fill="#e02020" stroke="#7c0909" /><circle cx="20" cy="23" r="6" fill="#e02020" stroke="#7c0909" /><circle cx="6" cy="19" r="1.500" fill="#ffb0b0" /></Plain>,
        <Tile fill="url(#gh-tile)"><path d="M15 28V12M15 20L7 13M15 18L23 11M15 14L11 6M15 15L19 5M8 13L4 12M8 13L7 8M22 11L26 11M22 11L22 6M12 18L6 18M18 18L24 17" stroke="#111" strokeWidth="2.500" fill="none" /></Tile>,
      ],
      [
        <Plain><path d="M3 11H14V5L27 15L14 25V19H3Z" fill="#4c4c4c" stroke="#111" strokeWidth="1.500" /></Plain>,
        <Plain><path d="M3 12H14V6L26 15L14 24V18H3Z" fill="#fff" stroke="#444" strokeWidth="1.500" /></Plain>,
      ],
      [
        <Plain><circle cx="12" cy="12" r="9.500" fill="#b9b9b9" stroke="#666" /><path d="M9 5L18 12L9 17Z" fill="#fff" /><circle cx="19" cy="20" r="8" fill="#d9608f" stroke="#8e2c58" /><ellipse cx="19" cy="18" rx="3" ry="4" fill="#fff" /></Plain>,
        <Plain><path d="M11 2H19M13 2V12L5 26Q5 28 8 28H22Q25 28 25 26L17 12V2" fill="#fbe6ee" stroke="#6d2140" strokeWidth="1.500" /><path d="M11 17H19L24 26Q24 27 22 27H8Q6 27 6 26Z" fill="#dc3a78" /></Plain>,
      ],
    ],
  },
];

const ghTabs: [string, string][] = [
  ['Maths', 'w-14'], ['Sets', 'w-12'], ['Vector', 'w-[59px]'], ['Curve', 'w-[55px]'], ['Surface', 'w-[67px]'], ['Mesh', 'w-[52px]'],
  ['Intersect', 'w-[72px]'], ['Transform', 'w-20'], ['Display', 'w-[66px]'], ['Kangaroo2', 'w-[72px]'],
];
const ghMenu: [string, string][] = [['File', 'w-11'], ['Edit', 'w-[47px]'], ['View', 'w-[53px]'], ['Display', 'w-[70px]'], ['Solution', 'w-[76px]'], ['Help', 'w-12']];

function GhHeader() {
  return (
    <header>
      <svg className="absolute size-0" aria-hidden="true">
        <defs>
          <linearGradient id="gh-hex" x1="0" y1="0" x2="0" y2="1"><stop offset="0" stopColor="#6a6a6a" /><stop offset=".5" stopColor="#222" /><stop offset="1" stopColor="#3a3a3a" /></linearGradient>
          <linearGradient id="gh-tile" x1="0" y1="0" x2="0" y2="1"><stop offset="0" stopColor="#7c7c7c" /><stop offset=".6" stopColor="#aaa" /><stop offset="1" stopColor="#dcdcdc" /></linearGradient>
        </defs>
      </svg>
      <div className="flex h-[37px] items-center bg-white pl-2 text-[#9a9a9a]">
        <h2>Grasshopper - nesting*</h2>
        <WindowButtons tone="text-[#999]" />
      </div>
      <nav className="flex h-[34px] items-center bg-linear-to-r from-[#f0f0f0] to-[#fcfcfc] pl-3.5">
        {ghMenu.map(([t, w]) => <button key={t} className={'text-left ' + w}>{t}</button>)}
        <button className="mr-3 ml-auto">nesting</button>
      </nav>
      <div role="tablist" className="flex h-7 items-center bg-[#f0f0f0] text-[12px] text-[#777]">
        <button role="tab" aria-selected="true" className="-mb-px mr-[10px] h-[29px] w-[65px] rounded-t-lg border border-b-0 border-[#8c8c8c] bg-linear-to-b from-white to-[#dadada] text-black">Params</button>
        {ghTabs.map(([t, w]) => <button key={t} role="tab" aria-selected="false" className={'pt-1 text-left ' + w}>{t}</button>)}
      </div>
      <div className="flex h-[72px] gap-[3px] rounded-tr-lg border-t border-[#999] bg-linear-to-b from-[#d7d7d7] to-[#f0f0f0] pt-0.5 pl-[3px]">
        {ribbon.map((r) => (
          <section key={r.name} aria-label={r.name} className="flex h-14 flex-col overflow-hidden rounded border border-[#8a8a8a] bg-linear-to-b from-[#e8e8e8] to-[#cfcfcf]">
            <div className="flex h-[37px] items-center pr-0.5 pl-px">
              {r.groups.map((g, gi) => (
                <React.Fragment key={gi}>
                  {gi > 0 && <span className="mx-[5px] h-7 w-0.5 border-l border-[#b2b2b2] bg-[#eee]" />}
                  {g.map((icon, k) => (
                    <button key={k} aria-label={r.name + ' ' + (gi + 1) + '.' + (k + 1)} className="grid w-[35px] place-items-center">{icon}</button>
                  ))}
                </React.Fragment>
              ))}
            </div>
            <button className="relative h-[18px] bg-linear-to-b from-[#3a3a3a] to-[#1a1a1a] text-[12px] leading-4 text-white">
              {r.name}
              <svg viewBox="0 0 8 8" className="absolute top-1 right-0.5 size-2.5" fill="#aaa" aria-hidden="true"><path d="M3 0H5V3H8L4 8L0 3H3Z" /></svg>
            </button>
          </section>
        ))}
      </div>
      <div className="flex h-[39px] items-center border-t-2 border-[#777] bg-linear-to-b from-white to-[#f0f0f0] pr-2 pl-1">
        <button aria-label="Open" className="w-7">
          <svg viewBox="0 0 28 28" className="size-7"><path d="M5 8V3L9 1H23L25 5V14H5Z" fill="#eee" stroke="#777" /><path d="M2 11L16 11L18 8H25V26H2Z" fill="#62b83a" stroke="#2c7312" strokeWidth="1.500" /></svg>
        </button>
        <button aria-label="Save" className="ml-2 w-7">
          <svg viewBox="0 0 28 28" className="size-7"><rect x="1.500" y="1.500" width="25" height="25" rx="2" fill="#1f67d4" stroke="#0c3480" strokeWidth="1.500" /><rect x="6" y="2" width="16" height="12" fill="#e9eef7" /><rect x="8" y="17" width="12" height="9" fill="#c7cfdf" /><rect x="10" y="18" width="4" height="7" fill="#123d8f" /></svg>
        </button>
        <span className="mr-1 ml-2 h-7 w-px bg-[#ccc]" />
        <div className="relative">
          <select aria-label="Zoom" defaultValue="47%" className="h-7 w-[180px] appearance-none border border-[#777] bg-white pl-[3px]">
            <option>47%</option>
            <option>100%</option>
          </select>
          <Tri dir="down" className="pointer-events-none absolute top-2.5 right-1 size-2" />
        </div>
        <button aria-label="Zoom extents" className="ml-[5px] flex items-center">
          <svg viewBox="0 0 28 28" className="size-7" fill="none" stroke="#111" strokeWidth="4"><path d="M2 9V3H10M18 3H26V9M26 19V25H18M10 25H2V19" /><path d="M11 11L17 17M17 11L11 17" strokeWidth="3" /></svg>
          <svg viewBox="0 0 6 4" className="ml-[9px] h-1 w-1.5"><path d="M0 0H6L3 4Z" /></svg>
        </button>
        <button aria-label="Named views" className="ml-2 flex items-center">
          <svg viewBox="0 0 28 28" className="size-7"><path d="M1 14Q14 -2 27 14Q14 30 1 14Z" fill="#d8f0fb" stroke="#1c3a4a" strokeWidth="2" /><circle cx="14" cy="14" r="7.500" fill="#4db6e6" stroke="#0e4f7a" strokeWidth="1.500" /><circle cx="14" cy="14" r="3" fill="#0b1b2a" /><circle cx="11.500" cy="11" r="1.500" fill="#fff" /></svg>
          <svg viewBox="0 0 6 4" className="ml-[9px] h-1 w-1.5"><path d="M0 0H6L3 4Z" /></svg>
        </button>
        <button aria-label="Sketch" className="ml-[5px]">
          <svg viewBox="0 0 28 28" className="size-7"><path d="M26 1Q29 14 20 23L12 15Q15 5 26 1Z" fill="#e6402e" stroke="#9a1c10" /><path d="M12 15L20 23Q15 28 9 25Q13 21 12 15Z" fill="#f3a03a" stroke="#6b2b0a" /><path d="M2 12Q9 13 5 20T10 26" fill="none" stroke="#401b14" strokeWidth="2.500" /></svg>
        </button>
        <div className="ml-auto flex items-center">
          <button aria-label="Preview off" className="grid w-[35px] place-items-center">
            <svg viewBox="0 0 28 28" className="size-7"><path d="M4 10L12 2Q22 1 24 9L17 17H8Z" fill="#e3e3e3" stroke="#777" /><ellipse cx="17" cy="8" rx="4" ry="3" fill="#aaa" /><path d="M3 20Q14 9 25 20Q14 32 3 20Z" fill="#2f2f2f" /></svg>
          </button>
          <button aria-label="Wireframe preview" className="grid w-[35px] place-items-center">
            <svg viewBox="0 0 28 28" className="size-7" fill="none" stroke="#555" strokeWidth="1.500"><path d="M1 18Q1 15 3 13L14 2Q26 1 27 12L15 25Q4 30 1 18Z" fill="#f5f5f5" /><ellipse cx="20" cy="9" rx="5" ry="6" transform="rotate(-45 20 9)" /><ellipse cx="9" cy="19" rx="4" ry="5" transform="rotate(-45 9 19)" /></svg>
          </button>
          <button aria-label="Shaded preview" aria-pressed="true" className="grid size-[34px] place-items-center border border-[#1d72b8]">
            <svg viewBox="0 0 28 28" className="size-7"><path d="M1 18Q1 15 3 13L14 2Q26 1 27 12L15 25Q4 30 1 18Z" fill="#c11212" stroke="#5c0505" /><ellipse cx="20" cy="9" rx="4" ry="5" transform="rotate(-45 20 9)" fill="#8a0b0b" /><path d="M4 16L14 6" stroke="#ff7a6e" strokeWidth="2" /></svg>
          </button>
          <span className="mx-[7px] h-[27px] w-px bg-[#ccc]" />
          <button aria-label="Selected preview" aria-pressed="true" className="grid size-[34px] place-items-center border border-[#1d72b8]">
            <svg viewBox="0 0 28 28" className="size-7"><path d="M7 8L14 2Q26 1 27 12L21 20Z" fill="#5db71d" stroke="#235c06" /><ellipse cx="19" cy="8" rx="4" ry="5" transform="rotate(-45 19 8)" fill="#2f7a0c" /><path d="M4 11L20 24Q12 28 4 24Q-1 18 4 11Z" fill="#d9d9d9" stroke="#999" /><path d="M2 5L25 26" stroke="#222" strokeWidth="1.500" /></svg>
          </button>
          <button aria-label="Document preview" className="grid w-[35px] place-items-center">
            <svg viewBox="0 0 28 28" className="size-7"><circle cx="14" cy="14" r="12" fill="#dcdcdc" stroke="#555" /><path d="M14 2A12 12 0 0 0 14 26Z" fill="#f08a1c" stroke="#8a2d05" /><path d="M3 17A12 12 0 0 0 14 26V18Z" fill="#b0400a" /></svg>
          </button>
          <span className="mx-[3px] h-[27px] w-px bg-[#ccc]" />
          <button aria-label="Preview mesh quality" className="flex items-center">
            <svg viewBox="0 0 28 28" className="size-7"><path d="M9 3H19L25 10V18L18 25H10L3 18V9Z" fill="#6cb8f4" stroke="#132c6e" strokeWidth="1.500" /><circle cx="11" cy="10" r="4" fill="#bfe3fc" /></svg>
            <svg viewBox="0 0 6 4" className="ml-[3px] h-1 w-1.5"><path d="M0 0H6L3 4Z" /></svg>
          </button>
        </div>
      </div>
    </header>
  );
}

/* ---------- Grasshopper canvas ---------- */

const OX = 1722;
const OY = 212;

type Kind = 'w' | 'p' | 'g';
// x1, y1, x2, y2, bar start, kind
const comps: [number, number, number, number, number, Kind][] = [
  [2060, 575, 2131, 615, 2093, 'w'], [2179, 622, 2250, 668, 2207, 'w'], [2150, 685, 2203, 716, 2169, 'p'],
  [2287, 665, 2352, 711, 2312, 'w'], [2244, 746, 2287, 783, 2253, 'w'], [2340, 760, 2405, 806, 2365, 'w'],
  [2452, 676, 2498, 708, 2464, 'w'], [2454, 785, 2499, 823, 2469, 'w'], [2528, 675, 2586, 739, 2547, 'w'],
  [2526, 778, 2584, 842, 2546, 'w'], [2695, 695, 2770, 726, 2722, 'w'], [2615, 741, 2680, 767, 2635, 'p'],
  [2695, 798, 2762, 829, 2722, 'w'], [2628, 841, 2692, 868, 2648, 'p'], [2708, 865, 2750, 899, 2717, 'w'],
  [2794, 889, 2847, 920, 2813, 'p'], [2828, 754, 2874, 785, 2840, 'w'], [2912, 754, 2972, 798, 2931, 'w'],
  [2901, 833, 2974, 860, 2922, 'p'], [3064, 786, 3135, 811, 3092, 'g'],
];
// x1, y1, x2, split
const sliders: [number, number, number, number][] = [
  [1863, 652, 1960, 1902], [1864, 665, 1976, 1918], [1863, 679, 1982, 1925], [1864, 705, 1961, 1892], [1864, 718, 1962, 1905],
  [1863, 732, 1961, 1884], [2461, 755, 2558, 2495], [2497, 873, 2594, 2537], [2545, 935, 2642, 2585],
];
const wires: number[][] = [
  [1960, 657, 2060, 599], [1975, 670, 2060, 590], [1981, 684, 2060, 609], [2131, 585, 2179, 630], [2126, 641, 2179, 645],
  [1961, 711, 2179, 659], [1961, 711, 2150, 709], [1961, 737, 2150, 700], [2202, 700, 2287, 682], [2249, 634, 2287, 672],
  [2352, 688, 2452, 682], [2352, 688, 2340, 767], [1961, 711, 2794, 913], [1961, 723, 2245, 756], [1961, 737, 2245, 773],
  [2287, 764, 2340, 777], [2405, 783, 2452, 692], [2405, 783, 2454, 804], [2497, 692, 2528, 707], [2499, 804, 2527, 810],
  [2585, 707, 2696, 703], [2557, 760, 2615, 754], [2680, 754, 2696, 717], [2584, 810, 2696, 806], [2594, 878, 2629, 854],
  [2594, 878, 2708, 874], [2692, 854, 2696, 821], [2750, 882, 2794, 904], [2641, 940, 2708, 889], [2847, 904, 2901, 847],
  [2770, 710, 2828, 760], [2762, 813, 2828, 770], [2874, 770, 2912, 776], [2971, 775, 3008, 719], [2973, 847, 3009, 878],
];
const greenWires: number[][] = [[2971, 775, 3064, 792], [2973, 847, 3064, 803]];

function wire([x1, y1, x2, y2]: number[]) {
  const h = Math.max((x2 - x1) / 2, Math.abs(y2 - y1) * 0.7);
  return `M${x1} ${y1}C${x1 + h} ${y1} ${x2 - h} ${y2} ${x2} ${y2}`;
}

const kindClass: Record<Kind, string> = {
  w: 'border-[#303030] bg-linear-to-b from-[#e2e2e2] to-[#c6c6c6]',
  p: 'border-[#2e2e36] bg-linear-to-b from-[#a5a3b6] to-[#8f8d9f]',
  g: 'border-[#1d4a10] bg-linear-to-b from-[#98f04a] to-[#80d632]',
};

function GhCanvas() {
  return (
    <div className="relative min-h-0 flex-1 overflow-hidden bg-[#d4d0c8]">
      <div className="absolute h-[99px] w-[128px] border border-[#9d8bd0] bg-[#b9a3e9]" style={{ left: 1859 - OX, top: 648 - OY }} />
      <svg viewBox="1722 212 1718 1163" preserveAspectRatio="xMinYMin slice" className="absolute inset-0 size-full" fill="none" aria-hidden="true">
        <path d={wires.map(wire).join('')} stroke="#4f4b46" strokeWidth="1.200" />
        <path d={greenWires.map(wire).join('')} stroke="#93b673" strokeWidth="1.200" />
      </svg>
      {comps.map(([x1, y1, x2, y2, bar, k]) => (
        <div
          key={x1 + '-' + y1}
          className={'absolute rounded-[2px] border shadow-[0_1px_1px_rgba(0,0,0,0.4)] ' + kindClass[k]}
          style={{ left: x1 - OX, top: y1 - OY, width: x2 - x1, height: y2 - y1 }}
        >
          <div
            className={'absolute inset-y-0 w-3 rounded-[2px] border border-black ' + (k === 'g' ? 'bg-[#22502a]' : 'bg-[#3d3d3d]')}
            style={{ left: bar - x1 - 1 }}
          />
        </div>
      ))}
      <div className="absolute h-[11px] w-6 rounded-[2px] border border-[#2e2e36] bg-[#9a98ab]" style={{ left: 2102 - OX, top: 636 - OY }} />
      {sliders.map(([x1, y, x2, split], i) => {
        const pct = ((split - x1) / (x2 - x1)) * 100;
        return (
          <input
            key={i}
            type="range"
            aria-label={'Number slider ' + (i + 1)}
            defaultValue={Math.round(pct)}
            className="absolute h-[11px] appearance-none rounded-[2px] border border-[#303030] shadow-[0_1px_1px_rgba(0,0,0,0.35)] [&::-webkit-slider-thumb]:size-px [&::-webkit-slider-thumb]:appearance-none"
            style={{
              left: x1 - OX,
              top: y - OY,
              width: x2 - x1,
              background: `linear-gradient(90deg,#9391a5 ${pct}%,#222 ${pct}%,#222 ${pct + 1}%,#d8d8d8 ${pct + 1}%)`,
            }}
          />
        );
      })}
      {[[3008, 680, 77, 79], [3009, 854, 56, 48]].map(([x, y, w, h]) => (
        <div
          key={x}
          className="absolute flex flex-col overflow-hidden rounded-[2px] border border-[#3b3b1a] bg-[#fff95c] shadow-[0_1px_1px_rgba(0,0,0,0.4)]"
          style={{ left: x - OX, top: y - OY, width: w, height: h }}
        >
          <div className="h-[9px] border-b border-[#2a2a10] bg-[#cbc848] text-center text-[6px] leading-[7px] text-[#55531e]">Panel</div>
        </div>
      ))}
      <div className="absolute bottom-0 left-0 h-9 w-2.5 border border-[#222] bg-linear-to-b from-[#ddd] to-[#777]" />
      <svg viewBox="0 0 64 64" className="absolute right-3 bottom-2 size-16" aria-label="Compass" role="img">
        <defs><radialGradient id="gh-ball"><stop offset="0" stopColor="#eee" /><stop offset="1" stopColor="#b2b2b2" /></radialGradient></defs>
        <path d="M11 26A27 27 0 0 1 26 8" fill="none" stroke="#000" strokeWidth="5" />
        <path d="M3 10L12 11L10 19L5 17Z" fill="#000" stroke="#000" strokeWidth="2" /><path d="M9 14L14 20" stroke="#000" strokeWidth="3" />
        <circle cx="36" cy="34" r="25" fill="#444" /><circle cx="36" cy="34" r="23" fill="url(#gh-ball)" stroke="#fff" strokeWidth="2.500" />
        <path d="M14 24L22 24L17 17ZM44 12L45 20L52 16ZM58 44L50 43L55 51ZM27 56L27 48L20 52Z" fill="#fff" />
      </svg>
    </div>
  );
}

function GrasshopperWindow() {
  return (
    <section aria-label="Grasshopper" className="relative flex min-w-0 flex-1 basis-0 flex-col overflow-hidden border-l-2 border-[#3a3c40] bg-[#f0f0f0]">
      <GhHeader />
      <GhCanvas />
      <footer className="flex h-[26px] shrink-0 items-center border-t border-[#fafafa] bg-[#f0f0f0] pl-1">
        <svg viewBox="0 0 20 20" className="size-[19px]" aria-hidden="true"><circle cx="10" cy="10" r="9" fill="#2f6fd0" stroke="#10336e" /><path d="M10 4V12M10 14V16.500" stroke="#fff" strokeWidth="3" /></svg>
        <span className="ml-[3px]">Autosave complete (60 seconds ago)</span>
        <span className="mr-[28px] ml-auto text-[#777]">1.0.0007</span>
        <svg viewBox="0 0 12 12" className="mt-2 mr-0.5 size-3" fill="#9a9a9a" aria-hidden="true"><path d="M9 0H11V2H9ZM5 4H7V6H5ZM9 4H11V6H9ZM1 8H3V10H1ZM5 8H7V10H5ZM9 8H11V10H9Z" /></svg>
      </footer>
    </section>
  );
}

/* ---------- Taskbar ---------- */

const Sv = ({ children }: { children: ReactNode }) => <svg viewBox="0 0 20 20" className="size-5" aria-hidden="true">{children}</svg>;
const Adobe = ({ t, c }: { t: string; c: string }) => (
  <span className={'grid size-[18px] place-items-center rounded-[3px] border text-[10px] leading-none ' + c}>{t}</span>
);
const Creative = ({ c }: { c: string }) => (
  <path d="M6 14A3.500 3.500 0 1 1 8 8L13 13A3 3 0 1 0 13 7L8 12" fill="none" stroke={c} strokeWidth="1.600" />
);

const apps: { name: string; icon: ReactNode; state?: 'open' | 'active' }[] = [
  { name: 'Chrome', state: 'open', icon: <Sv><circle cx="10" cy="10" r="9" fill="#f6c21a" /><path d="M10 10L2.200 5.500A9 9 0 0 1 17.800 5.500H10Z" fill="#dc4437" /><path d="M10 10L2.200 5.500A9 9 0 0 0 10 19L13.500 12Z" fill="#1e9d58" /><circle cx="10" cy="10" r="4.300" fill="#fff" /><circle cx="10" cy="10" r="3.300" fill="#4285f4" /></Sv> },
  { name: 'Settings', icon: <Sv><path d="M10 3V17M3 10H17M5 5L15 15M15 5L5 15" stroke="#fff" strokeWidth="2.600" /><circle cx="10" cy="10" r="4.200" fill="#101010" stroke="#fff" strokeWidth="1.800" /></Sv> },
  { name: 'Fusion', icon: <Sv><path d="M18 0L10 12L0 17L8 11Q13 6 18 0ZM9 12L16 18Q14 10 18 0Z" fill="#e8e8e8" /></Sv> },
  { name: 'File Explorer', icon: <Sv><path d="M1 4H8L10 6H19V16H1Z" fill="#f4bd3e" /><path d="M1 8H19V17H1Z" fill="#ffdf80" /><path d="M5 12H15V17H12V14H8V17H5Z" fill="#2d8fdc" /></Sv> },
  { name: 'To Do', icon: <Sv><path d="M1 10L5 7L9 11L17 3L19 7L9 17Z" fill="#2f7ee6" /></Sv> },
  { name: 'Zotero', icon: <Sv><path d="M4 1H16L18 10L16 19H4L2 10Z" fill="#b01c2a" stroke="#999" /><path d="M7 6H13L7 14H13" fill="none" stroke="#fff" strokeWidth="2" /></Sv> },
  { name: 'Spotify', icon: <FaSpotify className="size-5 text-[#1ed760]" /> },
  {
    name: 'Slack',
    state: 'open',
    icon: (
      <Sv>
        <circle cx="10" cy="10" r="9.500" fill="#fff" />
        <path d="M8 4V9M4 8H6" stroke="#36c5f0" strokeWidth="2" strokeLinecap="round" />
        <path d="M11 8H16M12 4V6" stroke="#2eb67d" strokeWidth="2" strokeLinecap="round" />
        <path d="M12 11V16M14 12H16" stroke="#ecb22e" strokeWidth="2" strokeLinecap="round" />
        <path d="M4 12H9M8 14V16" stroke="#e01e5a" strokeWidth="2" strokeLinecap="round" />
      </Sv>
    ),
  },
  { name: 'Sublime Text', icon: <Sv><rect x="1" y="1" width="18" height="18" rx="2" fill="#4b4b4b" /><path d="M15 4L5 7.500V10.500L15 13V16L5 17V14L11 12.500L5 10.500" fill="#ff9800" /></Sv> },
  { name: 'Illustrator', icon: <Adobe t="Ai" c="border-[#d97d1a] bg-[#331c00] text-[#f08c1e]" /> },
  { name: 'Premiere Pro', icon: <Adobe t="Pr" c="border-[#a35fd0] bg-[#2b0a38] text-[#d28af0]" /> },
  { name: 'Photoshop', icon: <Adobe t="Ps" c="border-[#2ba6d6] bg-[#04202e] text-[#8adcff]" /> },
  { name: 'Lightroom', icon: <Adobe t="Lr" c="border-[#2fb6b0] bg-[#0a2630] text-[#a0e8e8]" /> },
  { name: 'Word', icon: <Sv><path d="M7 2H19V18H7Z" fill="#4a9af0" /><path d="M7 10H19V18H7Z" fill="#1c5cbc" /><rect x="1" y="5" width="10" height="10" fill="#154a9e" /><path d="M3 7L4.500 13L6 8L7.500 13L9 7" fill="none" stroke="#fff" /></Sv> },
  { name: 'Creative Cloud', icon: <Sv><rect x="1" y="2" width="18" height="16" rx="3" fill="#da1212" /><Creative c="#fff" /></Sv> },
  { name: 'uTorrent', icon: <Sv><circle cx="10" cy="10" r="9" fill="#78b843" /><path d="M6 5V16M6 10Q6 13 9 13T12 10V5M12 10Q12 13 15 12" fill="none" stroke="#fff" strokeWidth="2" /></Sv> },
  { name: 'Twitch', icon: <span className="grid size-5 place-items-center rounded bg-[#9147ff]"><FaTwitch className="size-3 text-white" /></span> },
  { name: 'Steam', icon: <FaSteam className="size-5 text-[#9cc6e8]" /> },
  { name: 'Discord', icon: <FaDiscord className="size-4 text-[#8c9eff]" /> },
  { name: 'Rhinoceros', state: 'active', icon: <Sv><path d="M1 3L6 9L5 2L11 10L17 12L14 19H8L3 12Z" fill="#fff" /><path d="M17 2Q13 3 14 7T18 7T14 6" fill="none" stroke="#ddd" strokeWidth="1.500" /></Sv> },
  { name: 'Calibre', icon: <Sv><path d="M2 2H6V18H2Z" fill="#8a5a30" /><path d="M7 3H10V18H7Z" fill="#346a9e" /><path d="M11 4L14 3L19 17L15 18Z" fill="#b98a3c" /></Sv> },
  { name: 'Slicer', icon: <Sv><circle cx="10" cy="10" r="9" fill="#fff" /><path d="M16 4A8 8 0 0 0 4 14Z" fill="#222" /><path d="M16 7A8 8 0 0 1 5 16Z" fill="#ed7322" /></Sv> },
  { name: 'VMware', icon: <Sv><rect x="2" y="6" width="11" height="11" rx="2" fill="none" stroke="#f38b1d" strokeWidth="3" /><rect x="7" y="2" width="11" height="11" rx="2" fill="none" stroke="#2a9ddc" strokeWidth="3" /></Sv> },
  { name: 'Podcasts', icon: <Sv><path d="M8 18A8 8 0 1 1 18 9M9 13A4 4 0 1 1 14 9" fill="none" stroke="#fff" strokeWidth="2.200" /></Sv> },
  { name: 'Epilog', icon: <Sv><rect x="1.500" y="1.500" width="17" height="17" rx="2" fill="#0c1c22" stroke="#3c8d93" /><path d="M14 5H7V15H14M7 10H13" fill="none" stroke="#9fd8d8" strokeWidth="1.600" /></Sv> },
  { name: 'Cura', icon: <Sv><path d="M1 1H19V13L13 19H1Z" fill="#15a9e2" /><path d="M14 6H7V14H14" fill="none" stroke="#fff" strokeWidth="3" /></Sv> },
  { name: 'Zoom', icon: <span className="grid size-5 place-items-center rounded-md bg-[#2d8cff]"><FaVideo className="size-3 text-white" /></span> },
  { name: 'Recorder', icon: <Sv><circle cx="10" cy="10" r="9.500" fill="#7b4bff" /><circle cx="10" cy="10" r="4.500" fill="none" stroke="#fff" strokeWidth="2" /></Sv> },
];

const tray: { name: string; icon: ReactNode }[] = [
  { name: 'Security', icon: <Sv><circle cx="9" cy="9" r="8" fill="#8d8d8d" /><path d="M4 5H9V13M13 5V10" stroke="#ddd" fill="none" /><rect x="7" y="10" width="12" height="9" rx="1" fill="#f2c12e" /><path d="M9.500 10V8A3 3 0 0 1 16 8V10" fill="none" stroke="#f2c12e" strokeWidth="1.500" /></Sv> },
  { name: 'Spotify', icon: <FaSpotify className="size-5 text-[#1ed760]" /> },
  { name: 'Slack', icon: <FaSlack className="size-4 text-white" /> },
  { name: 'Nvidia', icon: <Sv><rect x="1" y="1" width="18" height="18" rx="2" fill="#3b3f42" stroke="#6b6f72" /><path d="M3 10Q9 3 17 6V14Q9 17 3 10Z" fill="#76b900" /><path d="M6 10Q10 6 14 10Q10 14 6 10Z" fill="none" stroke="#1f2a0c" strokeWidth="1.500" /></Sv> },
  { name: 'Volume', icon: <Sv><path d="M1 8H4L8 4V16L4 12H1Z" fill="none" stroke="#fff" /><path d="M11 7Q13 10 11 13M14 5Q17 10 14 15" fill="none" stroke="#fff" /><path d="M17 3Q21 10 17 17" fill="none" stroke="#777" /></Sv> },
  { name: 'Creative Cloud', icon: <Sv><Creative c="#c9c9c9" /></Sv> },
  { name: 'Eject', icon: <Sv><path d="M5 7H14V19H5ZM6.500 1H12.500V7H6.500Z" fill="none" stroke="#fff" strokeWidth="1.300" /><path d="M12 16L14 18L19 13" fill="none" stroke="#ccc" strokeWidth="1.300" /></Sv> },
  { name: 'Sunset', icon: <Sv><circle cx="10" cy="10" r="9" fill="#fab566" /><path d="M1 11Q6 6 11 11T19 12A9 9 0 0 1 1 11Z" fill="#5a76b4" /></Sv> },
  { name: 'Razer', icon: <Sv><circle cx="10" cy="10" r="9.500" fill="#44d62c" /><path d="M5 6Q9 8 10 13Q11 8 15 5M10 10V16M6 9Q8 13 11 12M14 9Q12 13 9 12" fill="none" stroke="#0e4d08" strokeWidth="1.500" /></Sv> },
  { name: 'Palette', icon: <Sv><rect x="1" y="1" width="18" height="18" fill="#a070c0" stroke="#6a9a3a" strokeWidth="2" /><path d="M2 2H8V18H2Z" fill="#d2706c" /><path d="M8 10H18V18H8Z" fill="#5aa97c" /><path d="M6 2V18M10 2V18M14 2V18M2 6H18M2 10H18M2 14H18" stroke="#555" strokeWidth=".6" /></Sv> },
  { name: 'Network', icon: <Sv><path d="M2 17A15 15 0 0 1 17 3M6 17A11 11 0 0 1 17 7M10 17A7 7 0 0 1 17 11" fill="none" stroke="#ddd" strokeWidth="1.300" /><circle cx="15.500" cy="16" r="2" fill="#fff" /></Sv> },
  { name: 'Battery', icon: <Sv><path d="M5 6H18V14H5Z" fill="#fff" stroke="#fff" /><path d="M18.500 8H20V12H18.500Z" fill="#fff" /><path d="M1 3V6H5V3M3 6V10" fill="none" stroke="#fff" strokeWidth="1.200" /></Sv> },
];

function Taskbar() {
  return (
    <nav aria-label="Taskbar" className="flex h-[38px] shrink-0 items-stretch bg-[#101010] text-white">
      <button aria-label="Start" className="grid w-12 shrink-0 place-items-center pr-1">
        <svg viewBox="0 0 20 20" className="size-5" fill="#fff" aria-hidden="true"><path d="M0 3L8.500 1.800V9.500H0ZM9.500 1.600L20 0V9.500H9.500ZM0 10.500H8.500V18.200L0 17ZM9.500 10.500H20V20L9.500 18.400Z" /></svg>
      </button>
      {apps.map((a) => (
        <button
          key={a.name}
          aria-label={a.name}
          className={
            'relative grid w-[46px] shrink-0 place-items-center ' +
            (a.state === 'active' ? 'border-b-[3px] border-[#aaa5e2] bg-[#343434]' : '') +
            (a.state === 'open' ? 'after:absolute after:inset-x-[5px] after:bottom-0 after:h-[3px] after:bg-[#aaa5e2]' : '')
          }
        >
          {a.icon}
        </button>
      ))}
      <div className="ml-auto flex items-center">
        {tray.map((t) => (
          <button key={t.name} aria-label={t.name} className="grid w-[30px] place-items-center">{t.icon}</button>
        ))}
        <time className="ml-2 w-[84px] whitespace-nowrap">10:02 AM</time>
        <button aria-label="Notifications">
          <svg viewBox="0 0 20 20" className="size-5" aria-hidden="true"><path d="M0 0H20V16H13L10 20L7 16H0Z" fill="#fff" /><path d="M4 4H16M4 8H16M4 12H12" stroke="#111" strokeWidth="1.500" /></svg>
        </button>
        <span className="mr-[5px] ml-[25px] h-9 w-px bg-[#666]" />
      </div>
    </nav>
  );
}

export default function App() {
  return (
    <div className="flex h-screen flex-col overflow-hidden border-t border-[#1a181c] bg-[#101010] font-['Noto_Sans','Open_Sans',sans-serif] text-[14px] leading-5 text-black">
      <main className="flex min-h-0 flex-1">
        <RhinoWindow />
        <GrasshopperWindow />
      </main>
      <Taskbar />
    </div>
  );
}
